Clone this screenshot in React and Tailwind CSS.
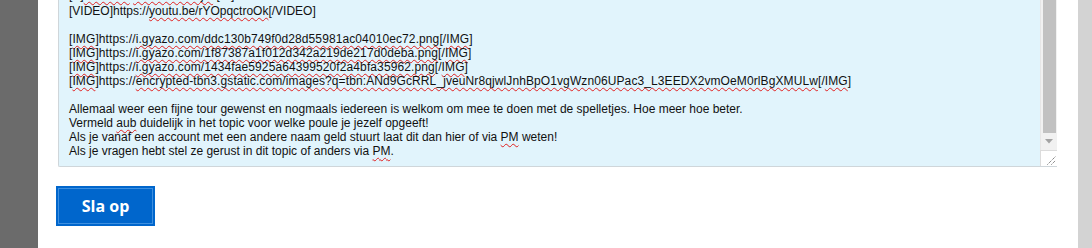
import React from "react";

const S = ({ children }) => (
  <span className="underline decoration-wavy decoration-[#e02020] decoration-1 underline-offset-[2px]">
    {children}
  </span>
);

export default function App() {
  return (
    <div className="flex h-[248px] w-[1092px] overflow-hidden bg-white" style={{ fontFamily: '"Liberation Sans", Arial, sans-serif' }}>
      <div className="w-[38px] shrink-0 bg-[#6b6b6b]" />
      <div className="flex w-[1040px] shrink-0 flex-col bg-white">
        {/* textarea */}
        <div className="ml-[20px] flex h-[167px] w-[999px] overflow-hidden rounded-bl-[2px] border-b border-l border-[#cfd6da] bg-[#e1f4fc]">
          <div className="flex-1 overflow-hidden pl-[10px] text-[12px] leading-[14px] text-[#111]">
            <div className="-mt-[10px] whitespace-pre">
              <div className="h-[14px] leading-[10px]">[B]<S>Toernooi</S> <S>deelnemerslijst</S>:[/B]</div>
              <div>[VIDEO]https://<S>youtu.be/rYOpqctroOk</S>[/VIDEO]</div>
              <div>&nbsp;</div>
              <div className="tracking-[0.1px]">[<S>IMG</S>]https://<S>i.gyazo.com/ddc130b749f0d28d55981ac04010ec72.png</S>[/<S>IMG</S>]</div>
              <div className="tracking-[0.1px]">[<S>IMG</S>]https://<S>i.gyazo.com/1f87387a1f012d342a219de217d0deba.png</S>[/<S>IMG</S>]</div>
              <div className="tracking-[0.1px]">[<S>IMG</S>]https://<S>i.gyazo.com/1434fae5925a64399520f2a4bfa35962.png</S>[/<S>IMG</S>]</div>
              <div className="tracking-[0.1px]">[<S>IMG</S>]https://<S>encrypted-tbn3.gstatic.com/images?q=tbn:ANd9GcRRL_jveuNr8qjwlJnhBpO1vgWzn06UPac3_L3EEDX2vmOeM0rlBgXMULw</S>[/<S>IMG</S>]</div>
              <div>&nbsp;</div>
              <div>Allemaal weer een fijne tour gewenst en nogmaals iedereen is welkom om mee te doen met de spelletjes. Hoe meer hoe beter.</div>
              <div>Vermeld <S>aub</S> duidelijk in het topic voor welke poule je jezelf opgeeft!</div>
              <div>Als je vanaf een account met een andere naam geld stuurt laat dit dan hier of via <S>PM</S> weten!</div>
              <div>Als je vragen hebt stel ze gerust in dit topic of anders via <S>PM</S>.</div>
            </div>
          </div>
          {/* scrollbar */}
          <div className="flex w-[17px] shrink-0 flex-col">
            <div className="flex flex-1 flex-col border-l border-[#e6e6e6] bg-[#f1f1f1] px-[2px]">
              <div className="h-[133px] w-[13px] bg-[#c1c1c1]" />
              <div className="flex flex-1 items-center justify-center">
                <svg width="8" height="5" viewBox="0 0 8 5">
                  <path d="M0 0 H8 L4 4.5 Z" fill="#a3a3a3" />
                </svg>
              </div>
            </div>
            <div className="flex h-[16px] items-end justify-end border-l border-t border-[#dcdcdc] bg-white pb-[1px] pr-[1px]">
              <svg width="9" height="9" viewBox="0 0 9 9">
                <path d="M0.5 8.5 L8.5 0.5 M4.5 8.5 L8.5 4.5" stroke="#555" strokeWidth="1" strokeDasharray="1 1" />
              </svg>
            </div>
          </div>
        </div>
        {/* button */}
        <div className="ml-[18px] mt-[19px]">
          <button className="flex h-[40px] w-[99px] items-center justify-center bg-[#0066cc] p-[2px]">
            <span
              className="flex h-full w-full items-center justify-center border border-[#3d8fe0] pb-[1px] text-[16px] font-bold text-white"
              style={{ fontFamily: '"Open Sans", sans-serif' }}
            >
              Sla op
            </span>
          </button>
        </div>
      </div>
      <div className="w-[14px] shrink-0 bg-[#d3d3d3]" />
    </div>
  );
}
